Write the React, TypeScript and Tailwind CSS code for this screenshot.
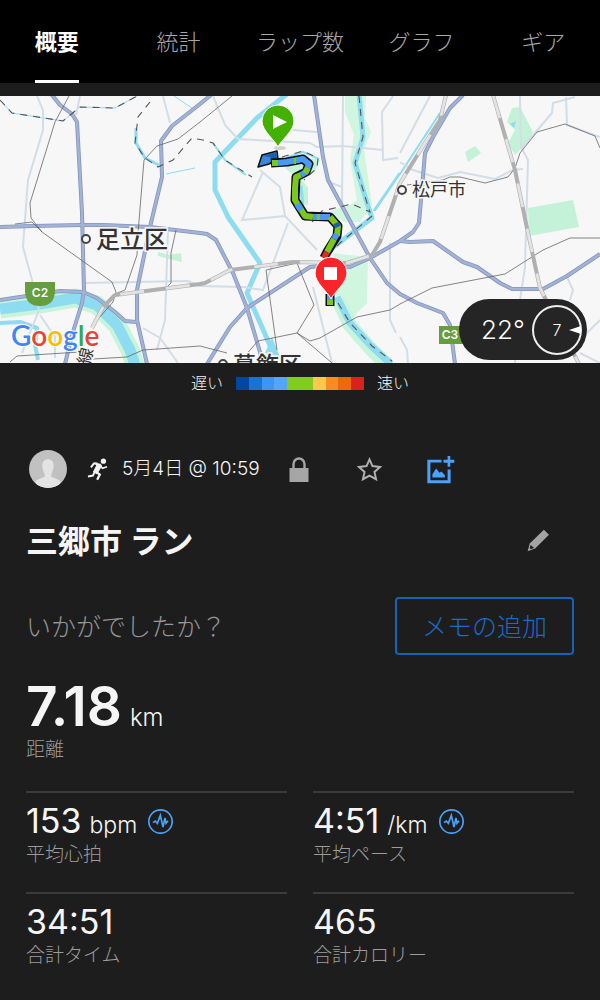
const tabs = ['概要', '統計', 'ラップ数', 'グラフ', 'ギア']

const paceColors = [
  '#0047a0', '#1873d3', '#3f95f2', '#55a5fc', '#84cc1c',
  '#84cc1c', '#fbc94a', '#f98b25', '#ef680c', '#d9211f',
]

const stats = [
  { value: '153', unit: 'bpm', label: '平均心拍', pulse: true },
  { value: '4:51', unit: '/km', label: '平均ペース', pulse: true },
  { value: '34:51', unit: '', label: '合計タイム', pulse: false },
  { value: '465', unit: '', label: '合計カロリー', pulse: false },
]

const highways = [
  '52,95 60,105 72,114 77,122 82,213 84,290 82,303 72,335 65,364',
  '0,227 33,226 82,225 103,225 150,227 200,233 207,234 216,240 233,273 247,308 260,352 262,364',
  '211,95 200,104 172,126 161,141 162,177 150,227 137,290 137,320 147,364',
  '0,300 20,297 60,291 83,292 97,298 115,312 125,321 136,322',
  '207,364 230,327 247,308 290,280 310,267 330,265 350,267 370,258 400,241 413,232 419,223 425,153 433,137 450,108 463,95',
  '314,95 323,157 328,180 370,258 387,283 400,294 417,303 443,313 450,325 455,364',
  '400,241 410,242 433,241 463,262 477,267 500,283 512,289 543,289 567,276 600,254',
]

const streets = [
  '37,96 43,110 43,130 28,180 23,247 32,280 39,310 22,353',
  '80,96 76,115',
  '163,96 170,123',
  '83,283 188,281 200,286 243,287 263,290 288,223',
  '168,230 165,320 157,350',
  '143,328 160,338 178,363',
  '40,315 55,337 55,358',
  '213,96 225,125 238,139 310,143 317,147 343,146 383,150',
  '293,130 317,132',
  '343,96 342,203',
  '263,172 242,220 285,216 280,187 260,170',
  '285,216 317,250',
  '393,96 382,112 383,160 398,158',
  '313,287 332,363',
  '390,243 390,320 396,333',
  '400,162 413,170 438,178 460,172 495,179 513,170 523,169',
  '430,96 400,153',
  '520,96 521,147 528,160 525,267 520,300 515,363',
  '575,97 553,103 552,113 522,148',
  '566,97 567,125 600,137',
  '567,277 573,290 570,300',
  '400,337 407,350 408,363',
  '600,320 587,333',
  '580,353 600,363',
  '329,182 342,187',
]

const localLines = [
  '69,96 55,122 30,203 31,218 42,232 112,282 116,292 113,302 92,326',
  '15,224 32,222 42,232',
  '232,96 200,122 178,139 157,146 144,160 138,233 137,255 125,290 115,294',
  '176,230 171,253 171,283 167,287',
  '10,362 17,356 80,352 84,349',
  '93,359 127,357 143,350 200,346 227,353',
  '266,270 297,263 314,305 297,333 258,341 243,358',
  '266,270 277,350',
  '332,363 297,333 310,341 320,338 357,317 390,310 400,304 432,288 505,274 543,250 570,238 600,238',
  '407,185 443,180 450,177 460,177 485,183 508,177 515,168 520,153 537,132 565,124 595,136 600,148',
]

const railways = [
  '92,328 103,307 115,295 200,284 205,283 230,270 293,262 347,263 372,255 380,242 400,183 425,143 440,120 446,95',
  '493,95 515,170 528,233 540,288 545,298 579,364',
]

const borders = [
  '0,100 12,113 63,121 80,107 115,108 137,96',
  '150,102 138,117 135,143 145,158 158,167 173,160 192,138 203,140 213,143 225,160 252,177',
  '359,96 363,137 355,163 367,203 370,212 352,204 322,211 312,222',
  '282,157 303,151 318,158 317,168 304,180',
  '372,216 340,243 328,256',
  '338,303 350,323 372,346 392,361',
]

// The track is cut into pieces, each coloured by its pace.
const track = [
  { points: '272,163 278,163', color: '#7cc71b' },
  { points: '278,163 287,162 303,159 309,164 306,172 301,175', color: '#479bf5' },
  { points: '294,161 296,161', color: '#7cc71b' },
  { points: '308,168 305,173', color: '#7cc71b' },
  { points: '301,175 296,177 295,188 295,200 305,216 313,217', color: '#7cc71b' },
  { points: '297,204 301,210', color: '#479bf5' },
  { points: '313,217 330,217', color: '#479bf5' },
  { points: '317,217 320,217', color: '#7cc71b' },
  { points: '330,217 338,226 337,236', color: '#7cc71b' },
  { points: '336,223 338,227', color: '#1c5fb0' },
  { points: '337,234 334,239', color: '#479bf5' },
  { points: '334,239 327,252', color: '#7cc71b' },
  { points: '327,252 324,258', color: '#df2b22' },
]

function MapPin({ x, y, color, children }: { x: number; y: number; color: string; children: React.ReactNode }) {
  return (
    <g transform={`translate(${x} ${y})`}>
      <path
        d="M0 26 C-3 19 -16 10 -16 0 A16 16 0 0 1 16 0 C16 10 3 19 0 26 Z"
        fill={color}
        stroke="#fff"
        strokeWidth="1"
      />
      {children}
    </g>
  )
}

function RouteMap() {
  return (
    <svg
      viewBox="0 96 600 267"
      className="block w-full bg-[#f7f7f7]"
      fontFamily="Inter, 'Noto Sans CJK JP', sans-serif"
      role="img"
      aria-label="Google"
    >
      {/* Parks and river banks */}
      <g fill="#c3f2d8">
        <path d="M512 108 L520 107 L533 132 L525 145 L515 155 L508 143 L515 130 L507 122 Z" />
        <path d="M465 152 L475 146 L481 153 L468 162 Z" />
        <path d="M528 208 L573 200 L579 227 L529 236 Z" />
        <path d="M158 252 L169 255 L181 253 L182 262 L173 260 L158 256 Z" />
        <path d="M333 253 L368 257 L367 303 L357 313 L345 330 L337 310 Z" fill="#d0f6e0" />
        <path
          d="M345 96 L366 96 L365 118 L371 132 L364 150 L372 205 L360 222 L345 222 L328 212 L350 205 L357 200 L350 160 L354 135 L345 112 Z"
          fill="#d0f6e0"
        />
        <path d="M285 168 L304 157 L320 160 L315 172 L302 180 L308 188 L308 206 L298 197 L296 177 Z" />
      </g>
      <g fill="none" stroke="#c9f4dc" strokeWidth="19">
        <polyline points="0,309 40,304 75,298 97,305 117,325 130,350 136,368" />
        <polyline points="338,300 350,325 370,348 388,366" strokeWidth="14" />
      </g>

      {/* Water */}
      <g fill="none" stroke="#8edcf0" strokeLinejoin="round">
        <polyline points="0,309 40,304 75,298 97,305 117,325 130,350 136,368" strokeWidth="11" />
        <polyline points="0,323 20,322 37,328 35,345 38,360" strokeWidth="4" />
        <polyline points="287,94 257,118 236,140 215,162 215,190 228,217 260,263 247,293 272,350" strokeWidth="5" />
        <polyline points="359,94 363,137 355,163 367,203 372,218 332,248" strokeWidth="5" />
        <polyline points="337,297 350,323 370,345 391,364" strokeWidth="7" />
        <polyline points="400,173 374,211" strokeWidth="3" />
        <polyline points="0,100 12,113 63,121 80,107 115,108 137,96" strokeWidth="1" />
        <polyline points="136,128 136,143 145,158 159,165" strokeWidth="3" />
        <polyline points="166,174 195,168" strokeWidth="1" />
        <polyline points="174,96 192,108" strokeWidth="1" />
        <polyline points="400,174 440,113" strokeWidth="2" />
        <polyline points="213,143 225,160 246,175" strokeWidth="2" />
        <polyline points="162,170 157,200" strokeWidth="1" />
        <polyline points="286,158 303,152 319,159" strokeWidth="2" />
        <polyline points="301,186 303,206" strokeWidth="3" />
      </g>
      <path d="M272 337 L280 357 L265 353 Z M510 124 L516 121 L514 128 Z" fill="#8edcf0" />

      {/* Roads */}
      <g fill="none" stroke="#d3dde6" strokeWidth="2">
        {streets.map((points) => <polyline key={points} points={points} />)}
      </g>
      <g fill="none" stroke="#8495bf" strokeWidth="4" strokeLinejoin="round">
        {highways.map((points) => <polyline key={points} points={points} />)}
      </g>
      <g fill="none" stroke="#a3b3d6" strokeWidth="2.4" strokeLinejoin="round">
        {highways.map((points) => <polyline key={points} points={points} />)}
      </g>

      {/* Railways and city borders */}
      <g fill="none" stroke="#666" strokeWidth="0.8">
        {localLines.map((points) => <polyline key={points} points={points} />)}
      </g>
      <g fill="none" stroke="#b0b0b0" strokeWidth="4" strokeLinejoin="round">
        {railways.map((points) => <polyline key={points} points={points} />)}
      </g>
      <g fill="none" stroke="#e3e3e3" strokeWidth="2.8" strokeDasharray="24 22">
        {railways.map((points) => <polyline key={points} points={points} />)}
      </g>
      <g fill="none" stroke="#555" strokeWidth="1.1" strokeDasharray="7 6">
        {borders.map((points) => <polyline key={points} points={points} />)}
      </g>

      {/* Place names */}
      <g fill="#333" stroke="#f7f7f7" strokeWidth="3" paintOrder="stroke" fontWeight="500">
        <text x="96" y="248" fontSize="24">足立区</text>
        <text x="412" y="196" fontSize="18" fontWeight="400">松戸市</text>
        <text x="233" y="373" fontSize="23">葛飾区</text>
        <text x="89" y="366" fontSize="17" fontWeight="400" transform="rotate(-75 89 366)">線</text>
      </g>
      <g fill="#f7f7f7" stroke="#444" strokeWidth="2">
        <circle cx="86" cy="239" r="4" />
        <circle cx="402" cy="190" r="4" />
        <circle cx="223" cy="364" r="4" />
      </g>

      {/* Expressway shields */}
      <g fontSize="12" fontWeight="600" textAnchor="middle">
        <path d="M25 282 H55 V292 Q54 306 40 306 Q26 306 25 292 Z" fill="#669d3e" />
        <text x="40" y="297" fill="#fff">C2</text>
        <rect x="439" y="326" width="26" height="18" fill="#669d3e" />
        <text x="450" y="339" fill="#fff">C3</text>
      </g>

      {/* Recorded track */}
      <g stroke="#0b0f14" strokeLinejoin="round">
        <path d="M262 155 L277 151 L278 159 L269 164 L258 167 Z" fill="#3a86dc" strokeWidth="1.5" />
        <path d="M263 156 L276 152 L277 158 L271 160 L270 157 Z" fill="#1c5fb0" stroke="none" />
        <polyline
          points="271,163 287,162 303,159 309,164 306,172 296,177 295,200 305,216 330,217 338,226 337,236 327,252 324,258"
          fill="none"
          strokeWidth="9"
        />
        <path d="M330 294 V306" strokeWidth="9" />
      </g>
      <g fill="none" strokeWidth="6" strokeLinejoin="round">
        {track.map((piece) => (
          <polyline key={piece.points} points={piece.points} stroke={piece.color} />
        ))}
        <path d="M330 294 V300" stroke="#479bf5" />
        <path d="M330 300 V305" stroke="#7cc71b" />
      </g>

      <ellipse cx="280" cy="148" rx="6" ry="2" fill="#000" opacity="0.15" />
      <MapPin x={278} y={121} color="#43b002">
        <path d="M-5 -6 L9 1 L-5 8 Z" fill="#fff" />
      </MapPin>
      <MapPin x={331} y={273} color="#fb2529">
        <rect x="-7" y="-6" width="13" height="13" fill="#fff" />
      </MapPin>

      <text
        x="11"
        y="346"
        fontFamily="Lato, sans-serif"
        fontSize="28"
        fontWeight="600"
        stroke="#fff"
        strokeWidth="2"
        paintOrder="stroke"
      >
        <tspan fill="#4285f4">G</tspan>
        <tspan fill="#ea4335">o</tspan>
        <tspan fill="#fbbc05">o</tspan>
        <tspan fill="#4285f4">g</tspan>
        <tspan fill="#34a853">l</tspan>
        <tspan fill="#ea4335">e</tspan>
      </text>
    </svg>
  )
}

function Weather() {
  return (
    <div className="absolute right-[13px] bottom-[3px] flex h-[61px] w-32 items-center justify-between rounded-full bg-[#252525] pr-[5px] pl-[22px] text-[26px] font-light text-white">
      <span>22°</span>
      <span className="relative flex size-[50px] items-center justify-center rounded-full border-2 border-[#eee] text-base">
        7
        <svg viewBox="0 0 12 8" className="absolute -right-px h-2 w-3" fill="#fff" aria-hidden="true">
          <path d="M0 4 L12 0 V8 Z" />
        </svg>
      </span>
    </div>
  )
}

function Avatar() {
  return (
    <svg viewBox="0 0 114 114" className="size-[38px] rounded-full" aria-hidden="true">
      <rect width="114" height="114" fill="#c1c1c1" />
      <path
        d="M57 28 C69 28 75 37 74 50 C73 60 69 68 67 72 V80 C75 85 88 86 94 94 V114 H20 V94 C26 86 39 85 47 80 V72 C45 68 41 60 40 50 C39 37 45 28 57 28 Z"
        fill="#e3e3e3"
      />
    </svg>
  )
}

function RunnerIcon() {
  return (
    <svg viewBox="258 50 64 72" className="h-6 w-[21px]" fill="none" stroke="#f2f2f2" aria-hidden="true">
      <circle cx="308" cy="62" r="8" fill="#f2f2f2" stroke="none" />
      <path d="M279 66 L299 70 L304 76 L295 92 L288 102 L276 95 L286 75 Z" fill="#f2f2f2" stroke="none" />
      <path d="M290 69 L279 69 L270 81" strokeWidth="6" />
      <path d="M298 75 L305 84 L319 79" strokeWidth="5" />
      <path d="M284 93 L297 103 L289 119" strokeWidth="7" />
      <path d="M282 93 L276 106 L261 109" strokeWidth="6" />
    </svg>
  )
}

function LockIcon() {
  return (
    <svg viewBox="0 0 20 25" className="h-[25px] w-5" aria-hidden="true">
      <path d="M4.500 13 V7 A5.500 5.500 0 0 1 15.500 7 V13" fill="none" stroke="#a6a6a6" strokeWidth="2.400" />
      <path d="M0.500 11 H19.500 V25 H0.500 Z" fill="#a6a6a6" />
    </svg>
  )
}

function StarIcon() {
  return (
    <svg viewBox="228 50 82 78" className="h-[26px] w-[27px]" fill="none" stroke="#b0b0b0" aria-hidden="true">
      <path
        d="M269 60 L278 80 L301 83 L284 98 L289 120 L269 109 L249 120 L254 98 L237 83 L260 80 Z"
        strokeWidth="6"
      />
    </svg>
  )
}

function AddPhotoIcon() {
  return (
    <svg viewBox="440 40 86 86" className="size-[29px]" fill="#4ba2fb" aria-hidden="true">
      <path d="M444 54 H486 V62 H453 V115 H504 V83 H513 V124 H444 Z" />
      <path d="M504 43 H512 V54 H524 V63 H512 V75 H504 V63 H492 V54 H504 Z" />
      <path d="M459 107 V97 L470 80 L480 93 L486 89 L496 100 V107 Z" />
    </svg>
  )
}

function PencilIcon() {
  return (
    <svg viewBox="744 264 68 68" className="size-[23px]" fill="#a3a3a3" aria-hidden="true">
      <path d="M794 266 L809 281 L768 322 L746 330 L752 307 Z" />
      <path d="M755 311 L765 320 L755 323 L752 320 Z" fill="#1d1d1d" />
    </svg>
  )
}

function PulseIcon() {
  return (
    <svg viewBox="0 0 75 75" className="size-[25px]" fill="none" stroke="#4ba2fb" aria-hidden="true">
      <circle cx="37.500" cy="37.500" r="35" strokeWidth="5" />
      <path d="M15 41 L22 36 L28 43 L37 19 L45 54 L51 27 L54 43 L60 35" strokeWidth="5" />
    </svg>
  )
}

export default function App() {
  return (
    <div className="min-h-screen bg-[#1d1d1d] font-[Inter,'Noto_Sans_CJK_JP',sans-serif] text-[#f5f5f5]">
      <header className="overflow-hidden bg-black">
        <nav className="-mx-1 grid grid-cols-5 justify-items-center">
          {tabs.map((tab, i) => (
            <button
              key={tab}
              type="button"
              className={
                i === 0
                  ? 'h-[83px] border-b-3 border-white pt-1 text-[22px] font-bold whitespace-nowrap text-white'
                  : 'h-[83px] border-b-3 border-transparent pt-1 text-[22px] font-light whitespace-nowrap text-[#a8a8a8]'
              }
            >
              {tab}
            </button>
          ))}
        </nav>
      </header>

      <section className="relative mt-[13px]">
        <RouteMap />
        <Weather />
      </section>

      <div className="flex h-10 items-center justify-center gap-[13px] text-base font-light">
        <span>遅い</span>
        <div className="flex h-[13px] w-32">
          {paceColors.map((color, i) => (
            <span key={i} className="flex-1" style={{ backgroundColor: color }} />
          ))}
        </div>
        <span>速い</span>
      </div>

      <main className="px-[26px]">
        <div className="mt-[47px] flex h-[38px] items-center px-[3px]">
          <Avatar />
          <span className="ml-5"><RunnerIcon /></span>
          <time className="ml-[14px] w-[167px] text-[19px] font-light whitespace-nowrap">5月4日 @ 10:59</time>
          <button type="button" aria-label="プライバシー"><LockIcon /></button>
          <button type="button" aria-label="お気に入り" className="ml-[47px]"><StarIcon /></button>
          <button type="button" aria-label="写真を追加" className="ml-[43px]"><AddPhotoIcon /></button>
        </div>

        <div className="mt-7 flex h-12 items-center justify-between pr-6">
          <h1 className="pt-1 text-[32px] font-bold">三郷市 ラン</h1>
          <button type="button" aria-label="編集"><PencilIcon /></button>
        </div>

        <div className="mt-[33px] flex items-center justify-between">
          <p className="pt-1 text-[25px] font-light text-[#969696]">いかがでしたか？</p>
          <button
            type="button"
            className="h-[58px] rounded-sm border-2 border-[#1761b8] px-[25px] pt-1 text-[25px] font-light text-[#1a6bcb]"
          >
            メモの追加
          </button>
        </div>

        <div className="mt-[21px] pb-[27px]">
          <p className="flex h-[60px] items-baseline gap-2 leading-[60px]">
            <span className="text-[55px] font-semibold">7.18</span>
            <span className="text-2xl font-light">km</span>
          </p>
          <p className="text-[19px] leading-7 font-light text-[#9c9c9c]">距離</p>
        </div>

        <div className="grid grid-cols-2 gap-x-[26px]">
          {stats.map((stat) => (
            <div key={stat.label} className="h-[101px] border-t-2 border-[#3b3b3b] pt-2">
              <div className="flex h-10 items-center">
                <p className="flex items-baseline gap-2 whitespace-nowrap">
                  <span className="text-[34px] leading-10">{stat.value}</span>
                  {stat.unit && <span className="text-[23px] leading-6 font-light">{stat.unit}</span>}
                </p>
                {stat.pulse && (
                  <button type="button" aria-label={stat.label} className="ml-[11px]"><PulseIcon /></button>
                )}
              </div>
              <p className="text-[19px] leading-7 font-light text-[#9c9c9c]">{stat.label}</p>
            </div>
          ))}
        </div>
      </main>
    </div>
  )
}
